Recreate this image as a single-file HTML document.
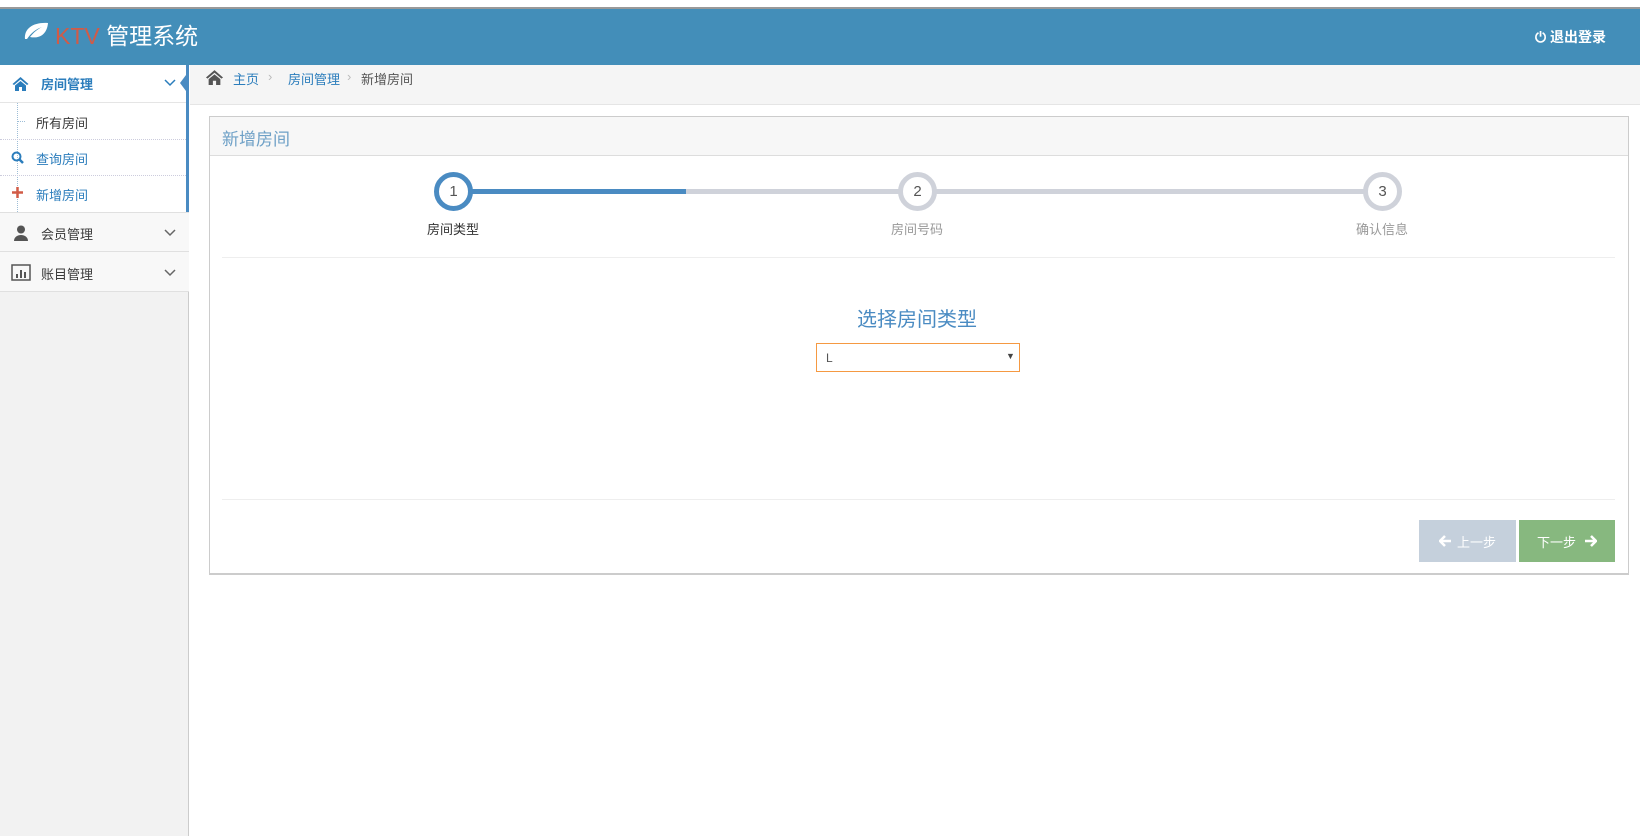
<!DOCTYPE html>
<html><head><meta charset="utf-8"><style>
*{box-sizing:border-box;margin:0;padding:0}
body{width:1640px;height:836px;position:relative;background:#fff;font-family:"Liberation Sans","Noto Sans CJK SC",sans-serif;font-size:13px;color:#393939;overflow:hidden}
.a{position:absolute}
</style></head><body>
<div class="a" style="left:0;top:7px;width:1640px;height:2px;background:#999"></div>
<div class="a" style="left:0;top:9px;width:1640px;height:56px;background:#438eb9"></div>
<svg class="a" style="left:22px;top:20px" width="28" height="22" viewBox="0 0 28 22"><path d="M3 19 C2 8 12 2 26 3 C25 14 18 19 8 17 C12 12 16 9 20 7 C14 9 9 13 5 19Z" fill="#fff"/></svg>
<div class="a" style="left:55px;top:17px;font-size:23px;color:#fff;white-space:nowrap"><span style="color:#d15b47">KTV</span> 管理系统</div>
<div class="a" style="left:1535px;top:27px;font-size:14px;color:#fff;font-weight:bold">⏻ 退出登录</div>

<div class="a" style="left:0;top:65px;width:189px;height:771px;background:#f2f2f2;border-right:1px solid #ccc"></div>
<div class="a" style="left:0;top:65px;width:189px;height:38px;background:#fff;border-bottom:1px solid #e5e5e5"></div>
<div class="a" style="left:186px;top:65px;width:3px;height:147px;background:#4a8bc2"></div>
<div class="a" style="left:180px;top:71px;width:0;height:0;border-top:12px solid transparent;border-bottom:12px solid transparent;border-right:9px solid #4a8bc2"></div>
<svg class="a" style="left:12px;top:76px" width="17" height="15" viewBox="0 0 17 15"><path d="M8.5 1 L0.5 8 L2 9 L8.5 3.5 L15 9 L16.5 8Z M3 9.5 V15 H7 V11 H10 V15 H14 V9.5 L8.5 5Z" fill="#2b7dbc"/></svg>
<div class="a" style="left:41px;top:74px;font-weight:bold;color:#2b7dbc">房间管理</div>
<svg class="a" style="left:164px;top:79px" width="12" height="8" viewBox="0 0 12 8"><path d="M1 1 L6 6 L11 1" stroke="#2b7dbc" stroke-width="1.5" fill="none"/></svg>
<div class="a" style="left:0;top:103px;width:186px;height:109px;background:#fff"></div>
<div class="a" style="left:17px;top:103px;height:109px;border-left:1px dotted #9dbdd6"></div>
<div class="a" style="left:18px;top:121px;width:7px;border-top:1px dotted #9dbdd6"></div>
<div class="a" style="left:0;top:139px;width:186px;border-top:1px dotted #ccd"></div>
<div class="a" style="left:0;top:175px;width:186px;border-top:1px dotted #ccd"></div>
<div class="a" style="left:36px;top:113px">所有房间</div>
<svg class="a" style="left:11px;top:151px" width="13" height="13" viewBox="0 0 13 13"><circle cx="5.5" cy="5.5" r="4" stroke="#2b7dbc" stroke-width="2" fill="none"/><path d="M8.5 8.5 L12 12" stroke="#2b7dbc" stroke-width="2.5"/></svg>
<div class="a" style="left:36px;top:149px;color:#2b7dbc">查询房间</div>
<svg class="a" style="left:12px;top:187px" width="11" height="11" viewBox="0 0 11 11"><path d="M5.5 0 V11 M0 5.5 H11" stroke="#d15b47" stroke-width="2.5"/></svg>
<div class="a" style="left:36px;top:185px;color:#2b7dbc">新增房间</div>
<div class="a" style="left:0;top:212px;width:189px;height:40px;background:#f8f8f8;border-top:1px solid #e0e0e0;border-bottom:1px solid #e0e0e0"></div>
<svg class="a" style="left:13px;top:225px" width="16" height="16" viewBox="0 0 16 16"><circle cx="8" cy="4.5" r="4" fill="#555"/><path d="M1 16 C1 8 15 8 15 16Z" fill="#555"/></svg>
<div class="a" style="left:41px;top:224px">会员管理</div>
<svg class="a" style="left:164px;top:229px" width="12" height="8" viewBox="0 0 12 8"><path d="M1 1 L6 6 L11 1" stroke="#666" stroke-width="1.5" fill="none"/></svg>
<div class="a" style="left:0;top:252px;width:189px;height:40px;background:#f8f8f8;border-bottom:1px solid #e0e0e0"></div>
<svg class="a" style="left:11px;top:264px" width="20" height="17" viewBox="0 0 20 17"><rect x="1" y="1" width="18" height="15" fill="none" stroke="#555" stroke-width="1.5"/><rect x="5" y="10" width="2" height="4" fill="#555"/><rect x="9" y="6" width="2" height="8" fill="#555"/><rect x="13" y="8" width="2" height="6" fill="#555"/></svg>
<div class="a" style="left:41px;top:264px">账目管理</div>
<svg class="a" style="left:164px;top:269px" width="12" height="8" viewBox="0 0 12 8"><path d="M1 1 L6 6 L11 1" stroke="#666" stroke-width="1.5" fill="none"/></svg>

<div class="a" style="left:190px;top:65px;width:1450px;height:40px;background:#f5f5f5;border-bottom:1px solid #e5e5e5"></div>
<svg class="a" style="left:205px;top:69px" width="19" height="16" viewBox="0 0 17 15"><path d="M8.5 1 L0.5 8 L2 9 L8.5 3.5 L15 9 L16.5 8Z M3 9.5 V15 H7 V11 H10 V15 H14 V9.5 L8.5 5Z" fill="#555"/></svg>
<div class="a" style="left:233px;top:69px;color:#2b7dbc">主页</div>
<div class="a" style="left:268px;top:69px;color:#bbb">›</div>
<div class="a" style="left:288px;top:69px;color:#2b7dbc">房间管理</div>
<div class="a" style="left:347px;top:69px;color:#bbb">›</div>
<div class="a" style="left:361px;top:69px;color:#555">新增房间</div>

<div class="a" style="left:209px;top:116px;width:1420px;height:459px;border:1px solid #ccc;border-bottom:2px solid #ccc"></div>
<div class="a" style="left:210px;top:117px;width:1418px;height:39px;background:#f7f7f7;border-bottom:1px solid #ddd"></div>
<div class="a" style="left:222px;top:125px;font-size:17px;color:#6fa1c7">新增房间</div>

<div class="a" style="left:453px;top:189px;width:464px;height:5px;background:#cfd2da"></div>
<div class="a" style="left:917px;top:189px;width:465px;height:5px;background:#cfd2da"></div>
<div class="a" style="left:453px;top:189px;width:233px;height:5px;background:#4a8bc2"></div>
<div class="a" style="left:434px;top:172px;width:39px;height:39px;border-radius:50%;border:5px solid #4a8bc2;background:#fff;text-align:center;line-height:29px;font-size:15px;color:#555">1</div>
<div class="a" style="left:898px;top:172px;width:39px;height:39px;border-radius:50%;border:5px solid #cfd2da;background:#fff;text-align:center;line-height:29px;font-size:15px;color:#555">2</div>
<div class="a" style="left:1363px;top:172px;width:39px;height:39px;border-radius:50%;border:5px solid #cfd2da;background:#fff;text-align:center;line-height:29px;font-size:15px;color:#555">3</div>
<div class="a" style="left:393px;top:219px;width:120px;text-align:center;color:#333">房间类型</div>
<div class="a" style="left:857px;top:219px;width:120px;text-align:center;color:#999">房间号码</div>
<div class="a" style="left:1322px;top:219px;width:120px;text-align:center;color:#999">确认信息</div>
<div class="a" style="left:222px;top:257px;width:1393px;border-top:1px solid #eee"></div>
<div class="a" style="left:717px;top:303px;width:400px;text-align:center;font-size:20px;color:#4a8bc2">选择房间类型</div>
<div class="a" style="left:816px;top:343px;width:204px;height:29px;border:1px solid #f59942;background:#fff"></div>
<div class="a" style="left:826px;top:351px;font-size:12px;color:#555">L</div>
<div class="a" style="left:1006px;top:351px;font-size:9px;color:#444">▼</div>
<div class="a" style="left:222px;top:499px;width:1393px;border-top:1px solid #eee"></div>
<div class="a" style="left:1419px;top:520px;width:97px;height:42px;background:#c5d0dc"></div>
<svg class="a" style="left:1439px;top:535px" width="13" height="12" viewBox="0 0 13 12"><path d="M6 1 L1 6 L6 11 M1.5 6 H12" stroke="#fff" stroke-width="2.5" fill="none"/></svg>
<div class="a" style="left:1457px;top:532px;color:#fff;font-size:13px">上一步</div>
<div class="a" style="left:1519px;top:520px;width:96px;height:42px;background:#87b87f"></div>
<div class="a" style="left:1537px;top:532px;color:#fff;font-size:13px">下一步</div>
<svg class="a" style="left:1584px;top:535px" width="13" height="12" viewBox="0 0 13 12"><path d="M7 1 L12 6 L7 11 M11.5 6 H1" stroke="#fff" stroke-width="2.5" fill="none"/></svg>
</body></html>
